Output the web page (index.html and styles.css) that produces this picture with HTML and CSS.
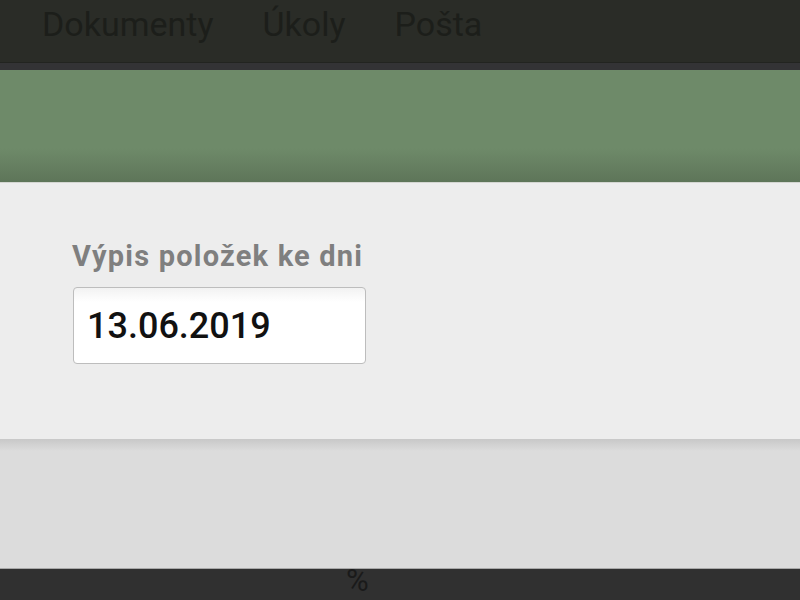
FILE: index.html
```html
<!DOCTYPE html>
<html lang="cs">
<head>
<meta charset="utf-8">
<title>Výpis položek</title>
<link rel="stylesheet" href="styles.css">
</head>
<body>
<div class="page">
  <nav class="topnav">
    <a class="nav-item">Dokumenty</a>
    <a class="nav-item">Úkoly</a>
    <a class="nav-item">Pošta</a>
  </nav>
  <div class="nav-strip"></div>
  <header class="banner"></header>
  <section class="panel">
    <label class="field-label" for="datum">Výpis položek ke dni</label>
    <input class="date-input" id="datum" type="text" value="13.06.2019">
  </section>
  <main class="content"></main>
  <footer class="footer"><span class="pct">%</span></footer>
</div>
</body>
</html>
```
FILE: styles.css
```css
* { box-sizing: border-box; }
html, body { margin: 0; padding: 0; }
body {
  font-family: Roboto, "Liberation Sans", sans-serif;
  background: #dcdcdc;
  width: 800px;
  height: 600px;
  overflow: hidden;
}
.page {
  display: flex;
  flex-direction: column;
  height: 600px;
}
.topnav {
  height: 63px;
  background: #2a2c27;
  border-bottom: 1px solid #222420;
  display: flex;
  align-items: flex-start;
  padding: 4px 0 0 42px;
  gap: 49px;
}
.nav-item {
  font-size: 34px;
  line-height: 40px;
  color: #1c1e1a;
  text-decoration: none;
}
.nav-strip {
  height: 7px;
  background: #333335;
}
.banner {
  height: 112px;
  background: linear-gradient(to bottom, #6e8a69 0%, #6e8a69 70%, #5e7559 100%);
}
.panel {
  height: 257px;
  background: #ededed;
  border-top: 1px solid #d4d6d2;
  padding: 56px 0 0 72px;
  display: flex;
  flex-direction: column;
  align-items: flex-start;
  gap: 14px;
}
.field-label {
  font-size: 29px;
  font-weight: bold;
  letter-spacing: 1.2px;
  color: #7f7f7f;
  line-height: 34px;
}
.date-input {
  margin-left: 1px;
  width: 293px;
  height: 77px;
  border: 1px solid #bdbdbd;
  border-radius: 4px;
  background: linear-gradient(to bottom, #f2f2f2 0px, #ffffff 14px, #ffffff 100%);
  font-family: Roboto, "Liberation Sans", sans-serif;
  font-size: 36px;
  font-weight: 500;
  color: #111;
  padding: 0 0 0 13px;
  outline: none;
}
.content {
  flex: 1;
  background: linear-gradient(to bottom, #c8c8c8 0px, #dcdcdc 12px, #dcdcdc 100%);
  border-bottom: 1px solid #a8a8a8;
}
.footer {
  height: 31px;
  background: #303030;
  display: flex;
  padding-left: 346px;
}
.pct {
  font-size: 31px;
  line-height: 24px;
  color: #1a1a1a;
}
```
